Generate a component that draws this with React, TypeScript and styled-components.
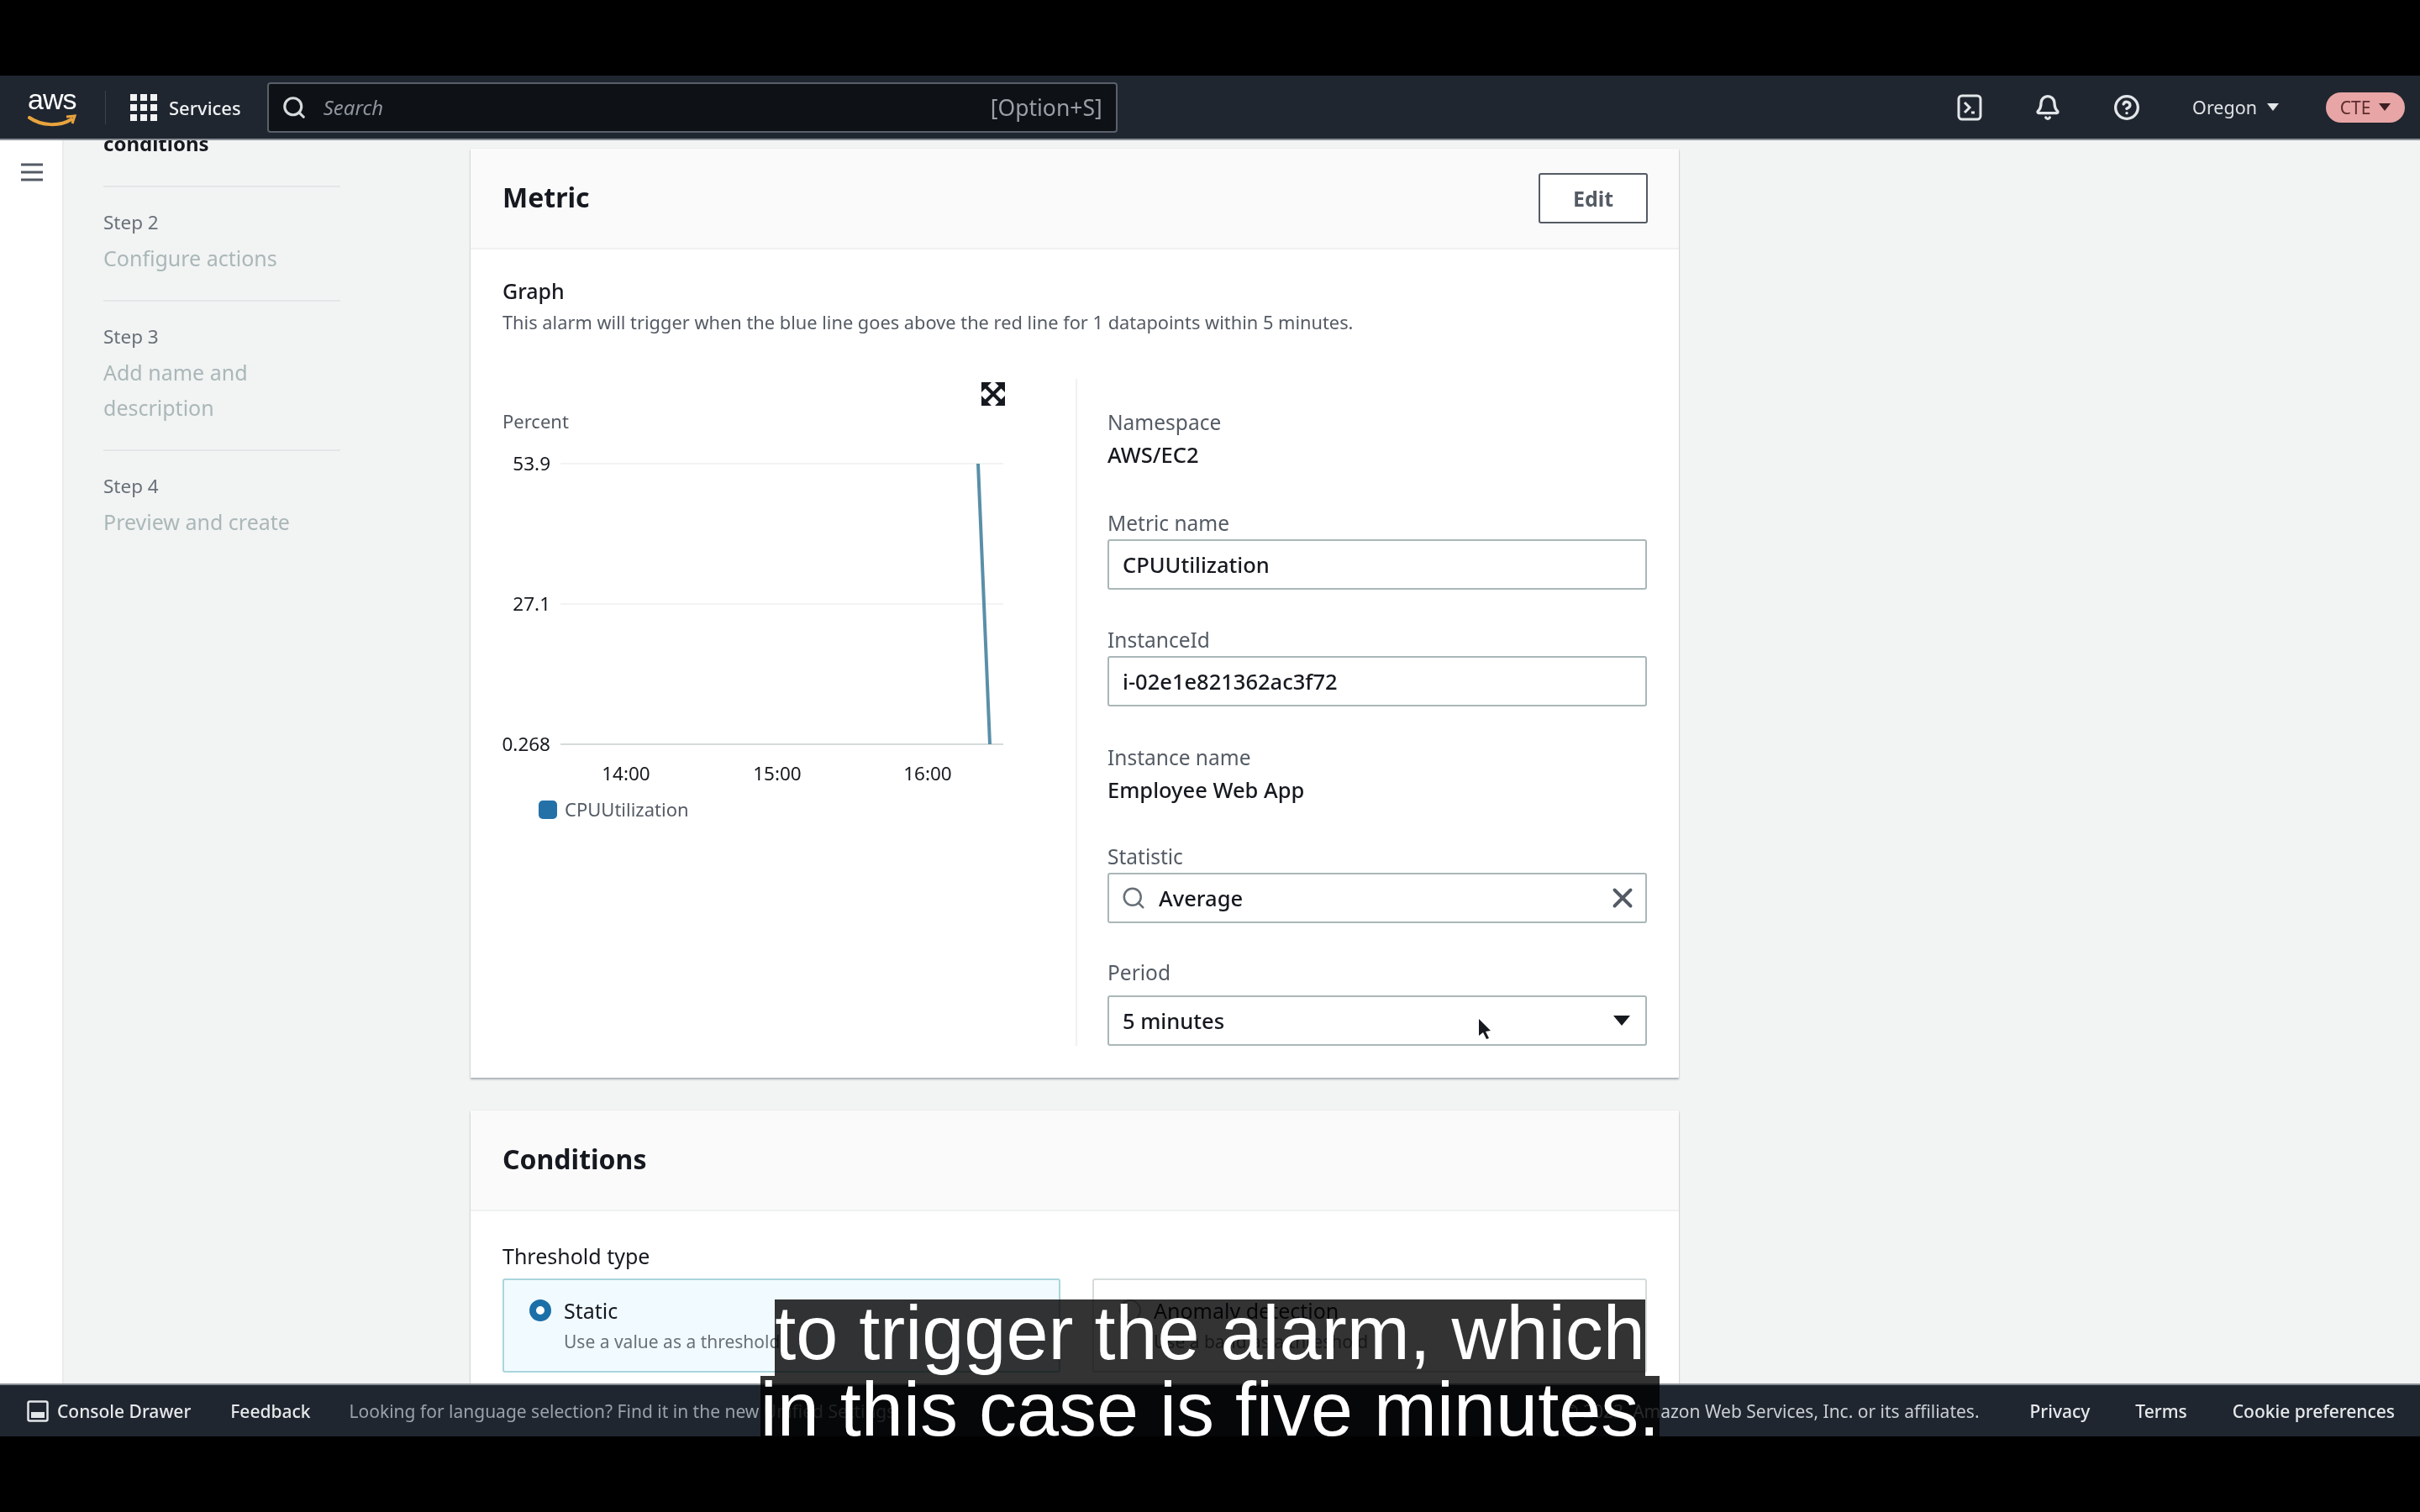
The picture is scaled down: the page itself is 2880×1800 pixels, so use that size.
import React from 'react';
import styled, { createGlobalStyle } from 'styled-components';
import { Bell, CircleHelp, Search, X } from 'lucide-react';

const GlobalStyle = createGlobalStyle`
  html, body {
    margin: 0;
    padding: 0;
    background: #000;
  }
  * {
    box-sizing: border-box;
  }
`;

const font = `"Noto Sans", "Open Sans", Arial, sans-serif`;

const Screen = styled.div`
  position: relative;
  width: 2880px;
  height: 1800px;
  padding: 90px 0;
  background: #000;
  font-family: ${font};
  overflow: hidden;
`;

const Frame = styled.div`
  display: flex;
  flex-direction: column;
  height: 1620px;
  background: #f2f3f3;
  filter: blur(0.7px);
`;

const Nav = styled.header`
  display: flex;
  align-items: center;
  flex: none;
  height: 77px;
  padding: 0 18px 0 33px;
  background: #1f2630;
  border-bottom: 2px solid #8a8f96;
  color: #e3e6e8;
`;

const Logo = styled.div`
  position: relative;
  width: 58px;
  height: 56px;
  color: #fff;
  font: 400 34px/36px "Liberation Sans", Arial, sans-serif;
  letter-spacing: -1px;
  svg {
    position: absolute;
    left: 0;
    bottom: 0;
  }
`;

const NavDivider = styled.span`
  width: 1px;
  height: 40px;
  margin: 0 29px 0 34px;
  background: #3a434e;
`;

const ServicesLabel = styled.span`
  margin-left: 14px;
  font-size: 22px;
  font-weight: 500;
  color: #eef0f1;
`;

const SearchBox = styled.div`
  display: flex;
  align-items: center;
  width: 1012px;
  height: 60px;
  margin-left: 31px;
  padding: 0 16px 0 15px;
  background: #0e1116;
  border: 2px solid #5a6069;
  border-radius: 4px;
`;

const SearchHint = styled.span`
  margin-left: 20px;
  flex: 1;
  font-size: 24px;
  font-style: italic;
  color: #8f959c;
`;

const SearchKeys = styled.span`
  font-size: 26.5px;
  color: #9a9fa6;
`;

const NavRight = styled.div`
  display: flex;
  align-items: center;
  margin-left: auto;
`;

const NavIcon = styled.div<{ $gap: number }>`
  display: flex;
  margin-right: ${(p) => p.$gap}px;
  color: #e3e6e8;
`;

const Region = styled.span`
  display: flex;
  align-items: center;
  gap: 12px;
  font-size: 21.5px;
  color: #dfe2e4;
  margin-right: 56px;
`;

const Caret = styled.span<{ $color: string; $size?: number; $right?: number }>`
  width: 0;
  height: 0;
  margin-right: ${(p) => p.$right ?? 0}px;
  border-left: ${(p) => p.$size ?? 7}px solid transparent;
  border-right: ${(p) => p.$size ?? 7}px solid transparent;
  border-top: ${(p) => (p.$size ?? 7) + 2}px solid ${(p) => p.$color};
`;

const AccountPill = styled.span`
  display: flex;
  align-items: center;
  justify-content: center;
  gap: 10px;
  width: 94px;
  height: 36px;
  border-radius: 18px;
  background: #e8a5a5;
  color: #5c2b2f;
  font-size: 21px;
`;

const Body = styled.div`
  display: flex;
  flex: 1;
  min-height: 0;
  overflow: hidden;
`;

const Rail = styled.aside`
  flex: none;
  width: 76px;
  padding: 26px 0 0 25px;
  background: #fff;
  border-right: 2px solid #e9ebed;
  color: #545b64;
`;

const Wizard = styled.nav`
  flex: none;
  width: 484px;
  padding-left: 47px;
  margin-top: -11px;
`;

const WizardCurrent = styled.div`
  font-size: 24px;
  line-height: 30px;
  font-weight: 700;
  color: #16191f;
  margin-bottom: 35px;
`;

const WizardDivider = styled.div`
  width: 282px;
  height: 2px;
  background: #e4e6e8;
`;

const WizardStep = styled.div`
  padding: 28px 0 29px;
`;

const StepNumber = styled.div`
  font-size: 22.5px;
  line-height: 28px;
  color: #687078;
`;

const StepName = styled.div`
  font-size: 25px;
  line-height: 42px;
  margin-top: 7px;
  width: 250px;
  color: #aab7b8;
`;

const Main = styled.main`
  flex: none;
  width: 1438px;
  padding-top: 10px;
`;

const Card = styled.section<{ $gap?: number }>`
  margin-top: ${(p) => p.$gap ?? 0}px;
  background: #fff;
  box-shadow: 0 2px 2px rgba(0, 28, 36, 0.3), 0 0 1px rgba(0, 28, 36, 0.15);
`;

const CardHeader = styled.div`
  display: flex;
  align-items: center;
  justify-content: space-between;
  height: 120px;
  padding: 0 37px 0 38px;
  background: #fafafa;
  border-bottom: 2px solid #f0f1f2;
`;

const CardTitle = styled.h2`
  margin: 0 0 4px;
  font-size: 32px;
  font-weight: 700;
  color: #16191f;
`;

const EditButton = styled.button`
  width: 130px;
  height: 60px;
  background: #fff;
  border: 2px solid #545b64;
  border-radius: 3px;
  font-family: inherit;
  font-size: 25px;
  font-weight: 700;
  color: #545b64;
`;

const CardBody = styled.div`
  padding: 34px 38px 38px;
`;

const SectionLabel = styled.div`
  font-size: 25px;
  line-height: 30px;
  font-weight: 500;
  color: #16191f;
`;

const Description = styled.div`
  margin-top: 9px;
  font-size: 21.8px;
  line-height: 28px;
  color: #545b64;
`;

const Columns = styled.div`
  display: flex;
  margin-top: 53px;
`;

const ChartColumn = styled.div`
  flex: none;
  width: 682px;
`;

const ChartSvg = styled.svg`
  display: block;
  overflow: visible;
  font-family: ${font};
`;

const FieldColumn = styled.div`
  flex: 1;
  padding-left: 36px;
  border-left: 2px solid #f0f1f2;
`;

const Field = styled.div<{ $top: number }>`
  margin-top: ${(p) => p.$top}px;
`;

const FieldLabel = styled.div<{ $gap?: number }>`
  margin-bottom: ${(p) => p.$gap ?? 6}px;
  padding-top: 3px;
  font-size: 24.5px;
  line-height: 27px;
  color: #545b64;
`;

const FieldValue = styled.div`
  margin-top: 10px;
  font-size: 25.5px;
  line-height: 30px;
  font-weight: 500;
  color: #16191f;
`;

const InputBox = styled.div`
  position: relative;
  display: flex;
  align-items: center;
  height: 60px;
  padding: 0 16px;
  background: #fff;
  border: 2px solid #aab7b8;
  border-radius: 3px;
  font-size: 25.5px;
  font-weight: 500;
  color: #16191f;
`;

const InputText = styled.span<{ $indent?: number }>`
  flex: 1;
  margin-left: ${(p) => p.$indent ?? 0}px;
`;

const InputSearchIcon = styled(Search)`
  margin-left: -2px;
`;

const ClearIcon = styled(X)`
  margin-right: -8px;
`;

const Pointer = styled.svg`
  position: absolute;
  left: 439px;
  top: 26px;
`;

const ThresholdLabel = styled.div`
  margin-top: 4px;
  font-size: 25px;
  line-height: 30px;
  color: #16191f;
`;

const Tiles = styled.div`
  display: grid;
  grid-template-columns: 664px 660px;
  gap: 38px;
  margin-top: 12px;
`;

const Tile = styled.div<{ $active?: boolean }>`
  display: flex;
  gap: 15px;
  height: 112px;
  padding: 20px 0 0 30px;
  background: ${(p) => (p.$active ? '#f1faff' : '#fff')};
  border: 2px solid ${(p) => (p.$active ? '#a9d5dc' : '#d5dbdb')};
  border-radius: 3px;
`;

const Radio = styled.span<{ $active?: boolean }>`
  flex: none;
  width: 26px;
  height: 26px;
  margin-top: 3px;
  background: #fff;
  border-radius: 50%;
  border: ${(p) => (p.$active ? '8px solid #1b6fa8' : '2px solid #aab7b8')};
`;

const TileTitle = styled.div`
  font-size: 25px;
  line-height: 32px;
  color: #16191f;
`;

const TileHint = styled.div`
  margin-top: 7px;
  font-size: 21px;
  line-height: 28px;
  color: #687078;
`;

const Footer = styled.footer`
  display: flex;
  align-items: center;
  flex: none;
  height: 63px;
  padding: 0 30px 0 32px;
  background: #1f2630;
  border-top: 2px solid #8a8f96;
  font-size: 21px;
  color: #d5dbdb;
  white-space: nowrap;
`;

const FooterLink = styled.span<{ $left?: number }>`
  margin-left: ${(p) => p.$left ?? 0}px;
  font-weight: 500;
  color: #e6e8ea;
`;

const FooterMuted = styled.span`
  margin-left: 46px;
  color: #9ba1a8;
`;

const FooterCopy = styled.span`
  margin-left: auto;
  color: #c9ced2;
`;

const Captions = styled.div`
  position: absolute;
  left: 0;
  right: 0;
  top: 1547px;
  display: flex;
  flex-direction: column;
  align-items: center;
  font-family: "Liberation Sans", Arial, sans-serif;
  font-size: 90px;
  color: #fff;
`;

const CaptionLine = styled.span`
  height: 91px;
  line-height: 81px;
  background: rgba(0, 0, 0, 0.8);
  white-space: nowrap;
`;

const GridIcon = () => (
  <svg width="32" height="32" viewBox="0 0 32 32" fill="#f2f3f3">
    {[0, 12, 24].flatMap((y) =>
      [0, 12, 24].map((x) => <rect key={`${x}-${y}`} x={x} y={y} width="8" height="8" />),
    )}
  </svg>
);

const TerminalIcon = () => (
  <svg width="30" height="32" viewBox="0 0 30 32" fill="none" stroke="currentColor" strokeWidth="3">
    <rect x="2" y="2" width="26" height="28" rx="4" />
    <path d="M9 10l6 6-6 6M17 22h4" />
  </svg>
);

const DrawerIcon = () => (
  <svg width="26" height="26" viewBox="0 0 26 26" fill="none" stroke="#e3e6e8" strokeWidth="2.5">
    <rect x="1.5" y="1.5" width="23" height="23" rx="2" />
    <rect x="5" y="14" width="16" height="7" fill="#e3e6e8" stroke="none" />
  </svg>
);

const MetricChart = () => (
  <ChartSvg width="682" height="540" viewBox="0 0 682 540">
    <text x="0" y="59" fontSize="22" fill="#545b64">Percent</text>
    <g stroke="#f2f3f3" strokeWidth="2">
      <line x1="69" y1="101" x2="596" y2="101" />
      <line x1="69" y1="268" x2="596" y2="268" />
    </g>
    <line x1="69" y1="435" x2="596" y2="435" stroke="#d5dbdb" strokeWidth="2" />
    <g fontSize="22.5" fill="#16191f" textAnchor="end">
      <text x="57" y="109">53.9</text>
      <text x="57" y="276">27.1</text>
      <text x="57" y="443">0.268</text>
    </g>
    <g fontSize="22.5" fill="#16191f" textAnchor="middle">
      <text x="147" y="478">14:00</text>
      <text x="327" y="478">15:00</text>
      <text x="506" y="478">16:00</text>
    </g>
    <line x1="566" y1="101" x2="580" y2="435" stroke="#5a8fa8" strokeWidth="4" />
    <rect x="43" y="502" width="22" height="22" rx="5" fill="#2471a8" />
    <text x="74" y="521" fontSize="22" fill="#545b64">CPUUtilization</text>
    <path d="M570 4h12l-12 12zM598 4h-12l12 12zM570 32h12l-12-12zM598 32h-12l12-12z" fill="#16191f" />
    <path d="M574 8l20 20M594 8l-20 20" stroke="#16191f" strokeWidth="4" />
  </ChartSvg>
);

const App: React.FC = () => (
  <>
    <GlobalStyle />
    <Screen>
      <Frame>
        <Nav>
          <Logo>
            aws
            <svg width="58" height="20" viewBox="0 0 58 20" fill="none">
              <path d="M2 4c14 10 36 11 50 2" stroke="#e8a33d" strokeWidth="4" strokeLinecap="round" />
              <path d="M46 3l10-1-3 9" stroke="#e8a33d" strokeWidth="3" />
            </svg>
          </Logo>
          <NavDivider />
          <GridIcon />
          <ServicesLabel>Services</ServicesLabel>
          <SearchBox>
            <Search size={30} color="#d5dbdb" strokeWidth={2.5} />
            <SearchHint>Search</SearchHint>
            <SearchKeys>[Option+S]</SearchKeys>
          </SearchBox>
          <NavRight>
            <NavIcon $gap={62}><TerminalIcon /></NavIcon>
            <NavIcon $gap={62}><Bell size={32} strokeWidth={2.5} /></NavIcon>
            <NavIcon $gap={62}><CircleHelp size={32} strokeWidth={2.5} /></NavIcon>
            <Region>Oregon <Caret $color="#e3e6e8" /></Region>
            <AccountPill>CTE <Caret $color="#3b1f22" /></AccountPill>
          </NavRight>
        </Nav>
        <Body>
          <Rail>
            <svg width="26" height="24" viewBox="0 0 26 24" fill="none" stroke="currentColor" strokeWidth="3">
              <path d="M0 3h26M0 12h26M0 21h26" />
            </svg>
          </Rail>
          <Wizard>
            <WizardCurrent>conditions</WizardCurrent>
            <WizardDivider />
            <WizardStep>
              <StepNumber>Step 2</StepNumber>
              <StepName>Configure actions</StepName>
            </WizardStep>
            <WizardDivider />
            <WizardStep>
              <StepNumber>Step 3</StepNumber>
              <StepName>Add name and description</StepName>
            </WizardStep>
            <WizardDivider />
            <WizardStep>
              <StepNumber>Step 4</StepNumber>
              <StepName>Preview and create</StepName>
            </WizardStep>
          </Wizard>
          <Main>
            <Card>
              <CardHeader>
                <CardTitle>Metric</CardTitle>
                <EditButton>Edit</EditButton>
              </CardHeader>
              <CardBody>
                <SectionLabel>Graph</SectionLabel>
                <Description>
                  This alarm will trigger when the blue line goes above the red line for 1 datapoints within 5 minutes.
                </Description>
                <Columns>
                  <ChartColumn>
                    <MetricChart />
                  </ChartColumn>
                  <FieldColumn>
                    <Field $top={35}>
                      <FieldLabel $gap={0}>Namespace</FieldLabel>
                      <FieldValue>AWS/EC2</FieldValue>
                    </Field>
                    <Field $top={50}>
                      <FieldLabel>Metric name</FieldLabel>
                      <InputBox>CPUUtilization</InputBox>
                    </Field>
                    <Field $top={43}>
                      <FieldLabel>InstanceId</FieldLabel>
                      <InputBox>i-02e1e821362ac3f72</InputBox>
                    </Field>
                    <Field $top={44}>
                      <FieldLabel $gap={0}>Instance name</FieldLabel>
                      <FieldValue>Employee Web App</FieldValue>
                    </Field>
                    <Field $top={48}>
                      <FieldLabel>Statistic</FieldLabel>
                      <InputBox>
                        <InputSearchIcon size={30} color="#687078" strokeWidth={2} />
                        <InputText $indent={15}>Average</InputText>
                        <ClearIcon size={38} color="#545b64" strokeWidth={2.5} />
                      </InputBox>
                    </Field>
                    <Field $top={42}>
                      <FieldLabel $gap={14}>Period</FieldLabel>
                      <InputBox>
                        <InputText>5 minutes</InputText>
                        <Caret $color="#16191f" $size={10} $right={2} />
                        <Pointer width="16" height="24" viewBox="0 0 16 24">
                          <path d="M1 0l14 14-6 1 4 8-3 1-4-8-5 4z" fill="#16191f" />
                        </Pointer>
                      </InputBox>
                    </Field>
                  </FieldColumn>
                </Columns>
              </CardBody>
            </Card>
            <Card $gap={39}>
              <CardHeader>
                <CardTitle>Conditions</CardTitle>
              </CardHeader>
              <CardBody>
                <ThresholdLabel>Threshold type</ThresholdLabel>
                <Tiles>
                  <Tile $active>
                    <Radio $active />
                    <div>
                      <TileTitle>Static</TileTitle>
                      <TileHint>Use a value as a threshold</TileHint>
                    </div>
                  </Tile>
                  <Tile>
                    <Radio />
                    <div>
                      <TileTitle>Anomaly detection</TileTitle>
                      <TileHint>Use a band as a threshold</TileHint>
                    </div>
                  </Tile>
                </Tiles>
              </CardBody>
            </Card>
          </Main>
        </Body>
        <Footer>
          <DrawerIcon />
          <FooterLink $left={10}>Console Drawer</FooterLink>
          <FooterLink $left={47}>Feedback</FooterLink>
          <FooterMuted>Looking for language selection? Find it in the new Unified Settings.</FooterMuted>
          <FooterCopy>© 2023, Amazon Web Services, Inc. or its affiliates.</FooterCopy>
          <FooterLink $left={60}>Privacy</FooterLink>
          <FooterLink $left={54}>Terms</FooterLink>
          <FooterLink $left={54}>Cookie preferences</FooterLink>
        </Footer>
      </Frame>
      <Captions>
        <CaptionLine>to trigger the alarm, which</CaptionLine>
        <CaptionLine>in this case is five minutes.</CaptionLine>
      </Captions>
    </Screen>
  </>
);

export default App;
